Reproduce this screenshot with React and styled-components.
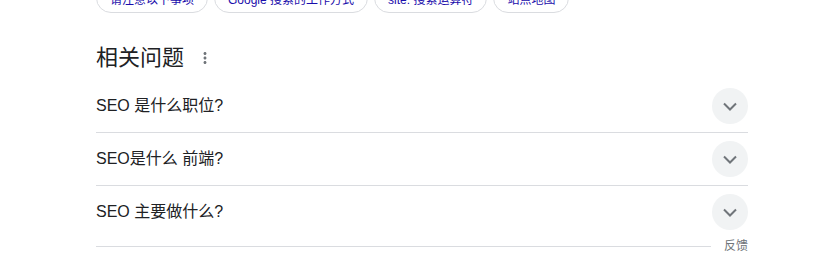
import React from 'react';
import styled, { createGlobalStyle } from 'styled-components';

const GlobalStyle = createGlobalStyle`
	body {
		margin: 0;
		background: #fff;
		font-family: 'Liberation Sans', Arial, 'Noto Sans CJK SC', sans-serif;
		color: #202124;
		overflow: hidden;
	}
`;

const Page = styled.div`
	width: 652px;
	padding-left: 96px;
`;

const ChipRow = styled.div`
	display: flex;
	gap: 6px;
	margin-top: -17px;
`;

const Chip = styled.a`
	display: flex;
	align-items: center;
	height: 28px;
	padding: 0 13px;
	border: 1px solid #dadce0;
	border-radius: 16px;
	font-size: 12px;
	color: #1a0dab;
	white-space: nowrap;
	text-decoration: none;
`;

const Heading = styled.div`
	display: flex;
	align-items: center;
	margin-top: 31px;
	margin-bottom: 8px;
	height: 28px;
`;

const Title = styled.h2`
	margin: 0;
	font-size: 22px;
	font-weight: 400;
	line-height: 28px;
	color: #202124;
`;

const MoreButton = styled.span`
	display: flex;
	margin-left: 12px;
	color: #70757a;
`;

const Row = styled.div`
	display: flex;
	align-items: center;
	justify-content: space-between;
	height: 52px;
	border-bottom: ${(p) => (p.last ? 'none' : '1px solid #dadce0')};
`;

const Question = styled.span`
	font-size: 16px;
	line-height: 24px;
	color: #202124;
`;

const Toggle = styled.span`
	display: flex;
	align-items: center;
	justify-content: center;
	width: 36px;
	height: 36px;
	border-radius: 50%;
	background: #f1f3f4;
	color: #70757a;
`;

const Footer = styled.div`
	display: flex;
	align-items: center;
	gap: 13px;
	height: 16px;
`;

const Rule = styled.div`
	flex: 1;
	height: 1px;
	background: #dadce0;
`;

const Feedback = styled.span`
	font-size: 12px;
	line-height: 16px;
	color: #70757a;
`;

const chips = ['请注意以下事项', 'Google 搜索的工作方式', 'site: 搜索运算符', '站点地图'];

const questions = ['SEO 是什么职位?', 'SEO是什么 前端?', 'SEO 主要做什么?'];

const Chevron = () => (
	<svg width="24" height="24" viewBox="0 0 24 24" fill="none" stroke="currentColor" strokeWidth="2">
		<path d="M6 9.5l6 6 6-6" />
	</svg>
);

const MoreVert = () => (
	<svg width="18" height="18" viewBox="0 0 24 24" fill="currentColor">
		<path d="M12 8c1.1 0 2-.9 2-2s-.9-2-2-2-2 .9-2 2 .9 2 2 2zm0 2c-1.1 0-2 .9-2 2s.9 2 2 2 2-.9 2-2-.9-2-2-2zm0 6c-1.1 0-2 .9-2 2s.9 2 2 2 2-.9 2-2-.9-2-2-2z" />
	</svg>
);

const App = () => (
	<>
		<GlobalStyle />
		<Page>
			<ChipRow>
				{chips.map((c) => (
					<Chip key={c}>{c}</Chip>
				))}
			</ChipRow>
			<Heading>
				<Title>相关问题</Title>
				<MoreButton>
					<MoreVert />
				</MoreButton>
			</Heading>
			{questions.map((q, i) => (
				<Row key={q} last={i === questions.length - 1}>
					<Question>{q}</Question>
					<Toggle>
						<Chevron />
					</Toggle>
				</Row>
			))}
			<Footer>
				<Rule />
				<Feedback>反馈</Feedback>
			</Footer>
		</Page>
	</>
);

export default App;
